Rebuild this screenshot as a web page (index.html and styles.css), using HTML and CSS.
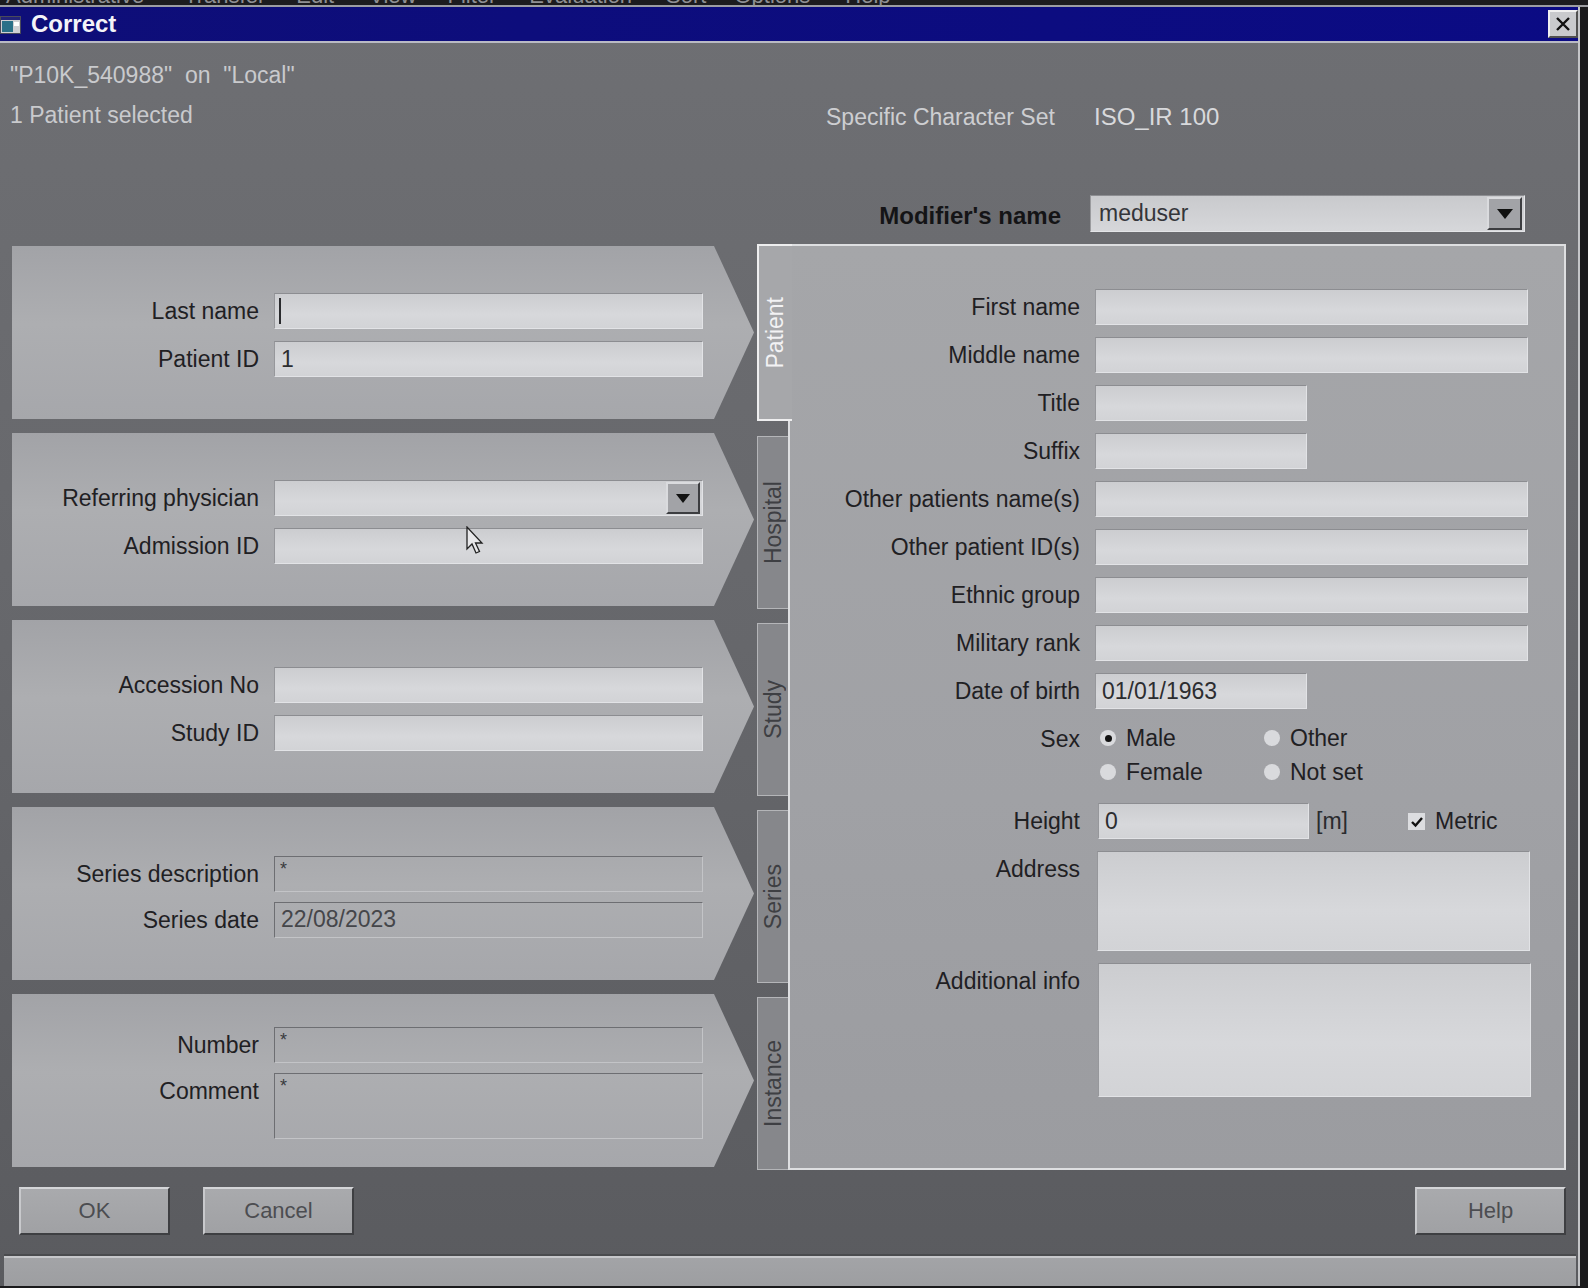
FILE: index.html
```html
<!DOCTYPE html>
<html lang="en">
<head>
<meta charset="utf-8">
<title>Correct</title>
<link rel="stylesheet" href="styles.css">
</head>
<body>
<div class="screen">
  <div class="menu-strip">
    <div class="menu-line">
      <span class="mi mi1">Administrative</span>
      <span class="mi mi2">Transfer</span>
      <span class="mi mi3">Edit</span>
      <span class="mi mi4">View</span>
      <span class="mi mi5">Filter</span>
      <span class="mi mi6">Evaluation</span>
      <span class="mi mi7">Sort</span>
      <span class="mi mi8">Options</span>
      <span class="mi mi9">Help</span>
    </div>
  </div>
  <div class="window">
    <div class="titlebar">
      <svg class="ticon" width="21" height="18" viewBox="0 0 21 18">
        <rect x="0.5" y="0.5" width="20" height="17" fill="#cfd0d4" stroke="#4a4a5a"/>
        <rect x="1" y="1" width="19" height="3" fill="#23237a"/>
        <rect x="2" y="5" width="11" height="11" fill="#2a7088"/>
        <rect x="14" y="6" width="5" height="4" fill="#ffffff"/>
      </svg>
      <span class="title">Correct</span>
      <span class="close">
        <svg width="20" height="20" viewBox="0 0 20 20"><path d="M4 4 L16 16 M16 4 L4 16" stroke="#111" stroke-width="2.4"/></svg>
      </span>
    </div>

    <div class="client">
      <div class="info-row1">"P10K_540988"&nbsp;&nbsp;on&nbsp;&nbsp;"Local"</div>
      <div class="info-row2">
        <span class="sel">1 Patient selected</span>
        <span class="cs-label">Specific Character Set</span>
        <span class="cs-value">ISO_IR 100</span>
      </div>

      <div class="modifier-row">
        <span class="mod-label">Modifier's name</span>
        <div class="combo mod-combo">
          <span class="combo-text">meduser</span>
          <span class="drop"><svg width="16" height="10" viewBox="0 0 16 10"><path d="M0 0 L16 0 L8 10 Z" fill="#111"/></svg></span>
        </div>
      </div>

      <div class="main">
        <div class="left-col">
          <div class="panel p1">
            <div class="prow"><span class="plabel">Last name</span><div class="field"><span class="caret"></span></div></div>
            <div class="prow"><span class="plabel">Patient ID</span><div class="field"><span class="ftext">1</span></div></div>
          </div>
          <div class="panel p2">
            <div class="prow"><span class="plabel">Referring physician</span>
              <div class="field combo-field"><span class="drop small"><svg width="14" height="9" viewBox="0 0 14 9"><path d="M0 0 L14 0 L7 9 Z" fill="#111"/></svg></span></div>
            </div>
            <div class="prow"><span class="plabel">Admission ID</span><div class="field"></div></div>
          </div>
          <div class="panel p3">
            <div class="prow"><span class="plabel">Accession No</span><div class="field"></div></div>
            <div class="prow"><span class="plabel">Study ID</span><div class="field"></div></div>
          </div>
          <div class="panel p4">
            <div class="prow"><span class="plabel">Series description</span><div class="field dis"><span class="star">*</span></div></div>
            <div class="prow"><span class="plabel">Series date</span><div class="field dis"><span class="ftext dtext">22/08/2023</span></div></div>
          </div>
          <div class="panel p5">
            <div class="prow"><span class="plabel">Number</span><div class="field dis"><span class="star">*</span></div></div>
            <div class="prow"><span class="plabel">Comment</span><div class="field dis tall"><span class="star">*</span></div></div>
          </div>
        </div>

        <div class="notebook">
          <div class="tabs">
            <div class="tab active"><span class="tab-text">Patient</span></div>
            <div class="tab"><span class="tab-text">Hospital</span></div>
            <div class="tab"><span class="tab-text">Study</span></div>
            <div class="tab"><span class="tab-text">Series</span></div>
            <div class="tab"><span class="tab-text">Instance</span></div>
          </div>
          <div class="page">
            <div class="frow"><span class="flabel">First name</span><div class="field full"></div></div>
            <div class="frow"><span class="flabel">Middle name</span><div class="field full"></div></div>
            <div class="frow"><span class="flabel">Title</span><div class="field short"></div></div>
            <div class="frow"><span class="flabel">Suffix</span><div class="field short"></div></div>
            <div class="frow"><span class="flabel">Other patients name(s)</span><div class="field full"></div></div>
            <div class="frow"><span class="flabel">Other patient ID(s)</span><div class="field full"></div></div>
            <div class="frow"><span class="flabel">Ethnic group</span><div class="field full"></div></div>
            <div class="frow"><span class="flabel">Military rank</span><div class="field full"></div></div>
            <div class="frow"><span class="flabel">Date of birth</span><div class="field short"><span class="ftext">01/01/1963</span></div></div>
            <div class="frow sexrow"><span class="flabel">Sex</span>
              <div class="radios">
                <span class="ropt"><span class="radio on"></span>Male</span>
                <span class="ropt"><span class="radio"></span>Other</span>
                <span class="ropt"><span class="radio"></span>Female</span>
                <span class="ropt"><span class="radio"></span>Not set</span>
              </div>
            </div>
            <div class="frow"><span class="flabel">Height</span>
              <div class="field hfield"><span class="ftext">0</span></div>
              <span class="unit">[m]</span>
              <span class="check"><svg width="14" height="12" viewBox="0 0 14 12"><path d="M2 6 L5.5 9.5 L12 2" stroke="#111" stroke-width="2.4" fill="none"/></svg></span>
              <span class="metric">Metric</span>
            </div>
            <div class="frow arow"><span class="flabel">Address</span><div class="field full addr"></div></div>
            <div class="frow arow"><span class="flabel">Additional info</span><div class="field full addinfo"></div></div>
          </div>
        </div>
      </div>

      <div class="buttons">
        <span class="btn ok">OK</span>
        <span class="btn cancel">Cancel</span>
        <span class="btn help">Help</span>
      </div>
    </div>
    <div class="statusbar"></div>
  </div>

  <svg class="pointer" width="20" height="30" viewBox="0 0 20 30">
    <path d="M1 1 L1 23 L6 18 L10 27 L13.5 25.5 L9.5 17 L16 17 Z" fill="#e8e8ea" stroke="#222" stroke-width="1.3"/>
  </svg>
</div>
</body>
</html>
```

FILE: styles.css
```css
* { box-sizing: border-box; }

body {
  margin: 0;
  background: #1a1a1c;
  font-family: "Liberation Sans", Arial, sans-serif;
  width: 1588px;
  height: 1288px;
  overflow: hidden;
}

.screen {
  position: relative;
  width: 1588px;
  height: 1288px;
}

/* clipped parent menu bar */
.menu-strip {
  height: 7px;
  overflow: hidden;
  background: #1c1c1f;
  border-bottom: 2px solid #9c9da2;
}
.menu-line {
  display: flex;
  margin-top: -16px;
  font-size: 22px;
  line-height: 24px;
  color: #8f9094;
  white-space: nowrap;
}
.mi1 { margin-left: 6px; }
.mi2 { margin-left: 40px; }
.mi3 { margin-left: 31px; }
.mi4 { margin-left: 35px; }
.mi5 { margin-left: 31px; }
.mi6 { margin-left: 33px; }
.mi7 { margin-left: 34px; }
.mi8 { margin-left: 28px; }
.mi9 { margin-left: 35px; }

.window {
  width: 1580px;
  height: 1279px;
  background: linear-gradient(180deg, #6e6f73 0%, #66676b 50%, #5a5b5f 100%);
  border-right: 2px solid #c4c5c8;
  overflow: hidden;
}

.titlebar {
  height: 36px;
  display: flex;
  align-items: center;
  background: linear-gradient(90deg, #0e0e78, #0b0b84);
  border-bottom: 2px solid #b9bac4;
}
.ticon { margin-left: 0; margin-top: 2px; }
.title {
  margin-left: 10px;
  color: #f4f4f8;
  font-weight: bold;
  font-size: 24px;
}
.close {
  margin-left: auto;
  margin-right: 0;
  width: 30px;
  height: 28px;
  display: flex;
  align-items: center;
  justify-content: center;
  background: #c9cacd;
  border-top: 2px solid #f0f0f0;
  border-left: 2px solid #f0f0f0;
  border-bottom: 2px solid #505050;
  border-right: 2px solid #505050;
}

.client {
  padding: 17px 12px 0 10px;
}

.info-row1 {
  height: 30px;
  line-height: 30px;
  font-size: 23px;
  color: #c9cacd;
  white-space: nowrap;
}
.info-row2 {
  margin-top: 10px;
  height: 30px;
  line-height: 30px;
  display: flex;
  font-size: 23px;
  color: #c9cacd;
  white-space: nowrap;
}
.sel { width: 816px; }
.cs-label { width: 268px; padding-top: 2px; color: #cdced1; }
.cs-value { font-size: 24px; padding-top: 2px; color: #d8d9dc; }

.modifier-row {
  margin-top: 65px;
  display: flex;
  justify-content: flex-end;
  align-items: center;
  padding-right: 41px;
}
.mod-label {
  font-weight: bold;
  font-size: 24px;
  color: #141416;
  margin-right: 29px;
  padding-top: 4px;
}
.combo {
  display: flex;
  align-items: center;
  background: linear-gradient(180deg, #c9cacd, #d6d7da);
  border: 1px solid #e4e5e8;
  border-top-color: #8d8e92;
  border-left-color: #9a9b9e;
}
.mod-combo {
  width: 435px;
  height: 37px;
}
.combo-text {
  margin-left: 8px;
  font-size: 23px;
  color: #34353a;
}
.drop {
  margin-left: auto;
  margin-right: 2px;
  width: 35px;
  height: 33px;
  display: flex;
  align-items: center;
  justify-content: center;
  background: #a2a3a7;
  border-top: 2px solid #dadbde;
  border-left: 2px solid #dadbde;
  border-bottom: 2px solid #3c3d40;
  border-right: 2px solid #3c3d40;
}
.drop.small {
  width: 34px;
  height: 32px;
}

/* main area */
.main {
  margin-top: 12px;
  display: flex;
  height: 926px;
}
.left-col {
  margin-left: 2px;
  width: 742px;
  padding-top: 2px;
  display: flex;
  flex-direction: column;
  gap: 14px;
}
.panel {
  height: 173px;
  clip-path: polygon(0 0, 702px 0, 742px 50%, 702px 100%, 0 100%);
  background: linear-gradient(180deg, #a2a3a7 0%, #adaeb1 45%, #a6a7ab 100%);
  padding-top: 47px;
  display: flex;
  flex-direction: column;
  gap: 12px;
}
.panel.p4 { padding-top: 49px; gap: 10px; }
.panel.p5 { padding-top: 33px; gap: 10px; }

.prow {
  display: flex;
  align-items: flex-start;
}
.plabel {
  width: 247px;
  text-align: right;
  line-height: 36px;
  font-size: 23px;
  color: #1f2023;
  white-space: nowrap;
}

.field {
  height: 36px;
  display: flex;
  align-items: center;
  background: linear-gradient(180deg, #cccdd0 0%, #d7d8db 60%, #d2d3d6 100%);
  border-top: 1px solid #8c8d91;
  border-left: 1px solid #96979b;
  border-bottom: 1px solid #e2e3e6;
  border-right: 1px solid #e2e3e6;
}
.prow .field {
  margin-left: 15px;
  width: 429px;
}
.field.dis {
  background: transparent;
  border-top: 1px solid #6d6e72;
  border-left: 1px solid #6d6e72;
  border-bottom: 1px solid #c3c4c7;
  border-right: 1px solid #c3c4c7;
  align-items: flex-start;
}
.field.tall { height: 66px; }
.ftext {
  margin-left: 6px;
  font-size: 23px;
  color: #2c2d30;
}
.dis .ftext { line-height: 32px; }
.dtext { color: #45464a; }
.star {
  margin-left: 5px;
  margin-top: 2px;
  font-size: 18px;
  color: #3a3b3e;
}
.caret {
  margin-left: 4px;
  width: 2px;
  height: 26px;
  background: #2a2b2e;
}

/* notebook */
.notebook {
  margin-left: 3px;
  flex: 1;
  display: flex;
}
.tabs {
  width: 33px;
  display: flex;
  flex-direction: column;
  gap: 14px;
  position: relative;
  z-index: 1;
  margin-right: -2px;
}
.tab {
  height: 173px;
  display: flex;
  align-items: center;
  justify-content: center;
  background: #86878b;
  border-top: 1px solid #b4b5b8;
  border-left: 1px solid #b4b5b8;
  border-bottom: 1px solid #b4b5b8;
  width: 31px;
}
.tab:nth-child(2) { margin-top: 1px; }
.tab.active {
  width: 35px;
  height: 177px;
  background: #a6a7aa;
  border-top: 2px solid #eeeeef;
  border-left: 2px solid #eeeeef;
  border-bottom: 2px solid #eeeeef;
}
.tab-text {
  writing-mode: vertical-rl;
  transform: rotate(180deg);
  font-size: 23px;
  color: #3e3f43;
  white-space: nowrap;
}
.tab.active .tab-text { color: #f2f2f4; }

.page {
  flex: 1;
  background: linear-gradient(180deg, #a5a6a9 0%, #a0a1a5 60%, #9b9ca0 100%);
  border: 2px solid #dedfe1;
  padding-top: 43px;
  display: flex;
  flex-direction: column;
  gap: 12px;
}
.frow {
  display: flex;
  align-items: flex-start;
}
.flabel {
  width: 290px;
  flex: none;
  text-align: right;
  line-height: 36px;
  font-size: 23px;
  color: #1f2023;
  white-space: nowrap;
}
.frow .field { margin-left: 15px; }
.field.full { width: 433px; }
.field.short { width: 212px; }
.field.hfield { width: 211px; margin-left: 18px; }
.field.addr { height: 100px; margin-left: 17px; }
.field.addinfo { height: 134px; margin-left: 18px; }
.arow .flabel { line-height: 36px; }

.sexrow { height: 70px; }
.radios {
  margin-left: 20px;
  display: grid;
  grid-template-columns: 164px 150px;
  grid-auto-rows: 34px;
  margin-top: 0;
}
.ropt {
  display: flex;
  align-items: center;
  font-size: 23px;
  color: #1f2023;
  white-space: nowrap;
}
.radio {
  width: 16px;
  height: 16px;
  border-radius: 50%;
  background: #d9dadd;
  margin-right: 10px;
  position: relative;
  display: flex;
  align-items: center;
  justify-content: center;
}
.radio.on::after {
  content: "";
  width: 7px;
  height: 7px;
  border-radius: 50%;
  background: #111;
}

.unit {
  margin-left: 7px;
  line-height: 36px;
  font-size: 23px;
  color: #2a2b2e;
  width: 92px;
}
.check {
  margin-top: 10px;
  width: 17px;
  height: 17px;
  background: #dcdde0;
  display: flex;
  align-items: center;
  justify-content: center;
}
.metric {
  margin-left: 10px;
  line-height: 36px;
  font-size: 23px;
  color: #1f2023;
}

/* buttons */
.buttons {
  margin-top: 17px;
  height: 48px;
  display: flex;
}
.btn {
  width: 151px;
  height: 48px;
  display: flex;
  align-items: center;
  justify-content: center;
  font-size: 22px;
  color: #4c4d51;
  background: linear-gradient(180deg, #a9aaad, #a0a1a4);
  border-top: 2px solid #d4d5d8;
  border-left: 2px solid #c8c9cc;
  border-bottom: 2px solid #3e3f42;
  border-right: 2px solid #3e3f42;
}
.ok { margin-left: 9px; }
.cancel { margin-left: 33px; }
.help { margin-left: auto; }

.statusbar {
  margin: 19px 2px 0 4px;
  height: 33px;
  background: linear-gradient(180deg, #a3a4a7, #9d9ea1);
  border-top: 2px solid #4a4b4e;
  box-shadow: inset 0 2px 0 #c6c7ca;
}

.pointer {
  position: absolute;
  left: 466px;
  top: 526px;
}
```
